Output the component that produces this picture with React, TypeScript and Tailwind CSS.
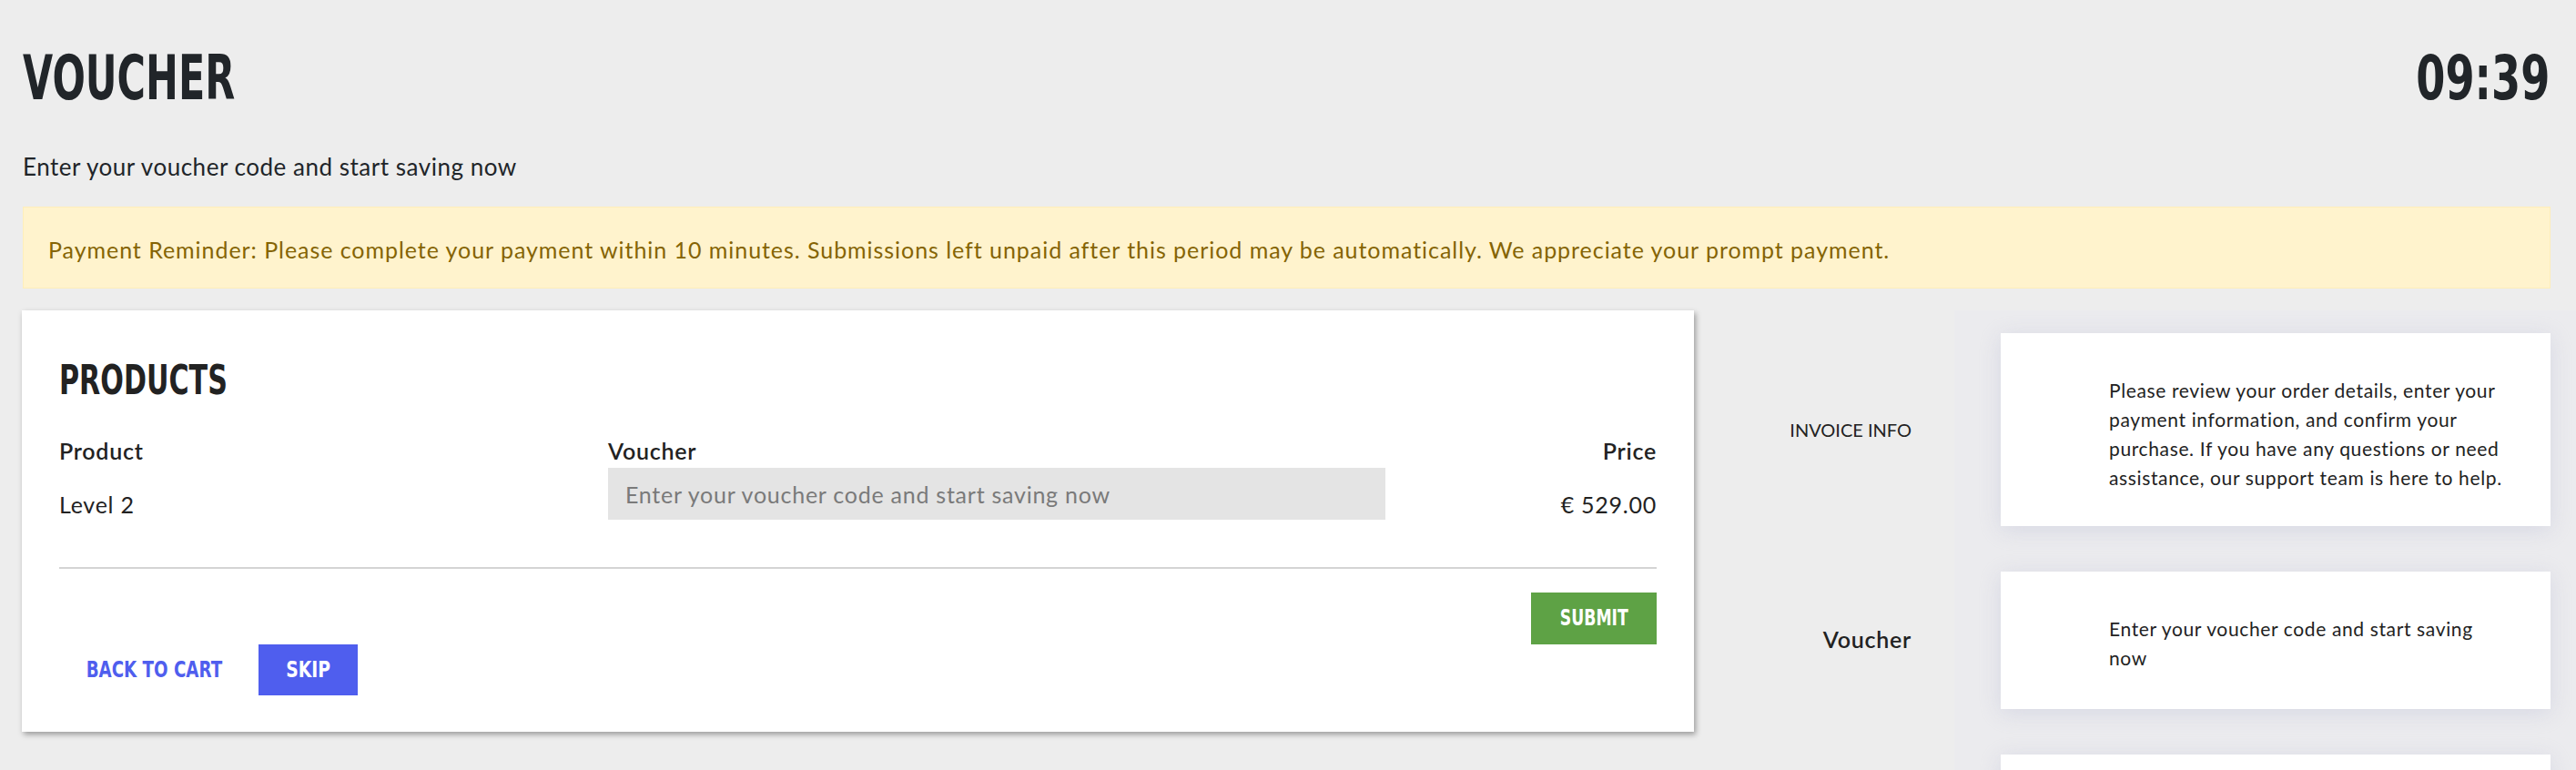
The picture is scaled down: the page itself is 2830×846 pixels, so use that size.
const display = "font-['DejaVu_Sans',sans-serif] font-bold uppercase";
const body = "font-['Lato','Noto_Sans',sans-serif]";

const SIDE = [
  {
    label: "INVOICE INFO",
    labelClass: "text-[20px] font-normal tracking-normal",
    text: "Please review your order details, enter your payment information, and confirm your purchase. If you have any questions or need assistance, our support team is here to help.",
  },
  {
    label: "Voucher",
    labelClass: "text-[25px] font-semibold",
    text: "Enter your voucher code and start saving now",
  },
  {
    label: "",
    labelClass: "text-[25px] font-semibold",
    text: "",
  },
];

function ProductsCard() {
  return (
    <div className="w-[1837px] shrink-0 self-start bg-white px-[41px] pt-[54px] pb-[40px] shadow-[2px_3px_6px_rgba(0,0,0,0.35)]">
      <h2 className={`${display} text-[45px] leading-none text-[#222]`}>
        <span className="inline-block origin-left scale-x-[0.67]">Products</span>
      </h2>

      <div className="mt-[37px] grid grid-cols-[603px_850px_1fr] text-[25px] leading-[1.5] tracking-[0.03em] text-[#222]">
        <div className="font-semibold">Product</div>
        <div className="font-semibold">Voucher</div>
        <div className="text-right font-semibold">Price</div>

        <div className="pt-[22px]">Level 2</div>
        <div>
          <input
            type="text"
            placeholder="Enter your voucher code and start saving now"
            className={`${body} block h-[57px] w-[854px] bg-[#e4e4e4] px-[19px] text-[25px] tracking-[0.03em] text-[#222] outline-none placeholder:text-[#7a7a7a]`}
          />
        </div>
        <div className="pt-[22px] text-right">€ 529.00</div>
      </div>

      <div className="mt-[49px] h-[2px] bg-[#d4d4d4]" />

      <div className="mt-[26px] flex justify-end">
        <button
          type="button"
          className={`${display} flex h-[57px] w-[138px] items-center justify-center bg-[#5ea245] text-[25px] text-white`}
        >
          <span className="inline-block scale-x-[0.69]">Submit</span>
        </button>
      </div>

      <div className="flex items-center gap-[10px]">
        <button
          type="button"
          className={`${display} flex h-[56px] w-[209px] items-center justify-center text-[25px] text-[#4f5eee]`}
        >
          <span className="inline-block whitespace-nowrap scale-x-[0.73]">Back to cart</span>
        </button>
        <button
          type="button"
          className={`${display} flex h-[56px] w-[109px] items-center justify-center bg-[#4f5eee] text-[25px] text-white`}
        >
          <span className="inline-block scale-x-[0.75]">Skip</span>
        </button>
      </div>
    </div>
  );
}

function SidePanel() {
  return (
    <div className="flex-1 bg-[linear-gradient(to_right,transparent_286px,#ebebee_286px)] pt-[25px]">
      <div className="flex flex-col gap-[50px]">
        {SIDE.map((row, i) => (
          <div key={i} className="grid grid-cols-[286px_1fr]">
            <div className={`flex items-center justify-end pr-[47px] tracking-[0.03em] text-[#222] ${row.labelClass}`}>
              {row.label}
            </div>
            <div className="pl-[51px] pr-[28px]">
              <div className="min-h-[151px] bg-white pt-[47px] pb-[37px] pl-[119px] pr-[40px] shadow-[0_4px_22px_rgba(190,194,214,0.45)]">
                <p className="w-[434px] text-[21px] leading-[32px] tracking-[0.03em] text-[#222]">{row.text}</p>
              </div>
            </div>
          </div>
        ))}
      </div>
    </div>
  );
}

export default function App() {
  return (
    <div className={`${body} min-h-screen bg-[#ededed] text-[#212529]`}>
      <div className="pl-[25px] pr-[29px] pt-[52px]">
        <div className="flex items-start justify-between">
          <h1 className={`${display} text-[68px] leading-none text-[#212529]`}>
            <span className="inline-block origin-left scale-x-[0.63]">Voucher</span>
          </h1>
          <div className={`${display} text-[68px] leading-none text-[#212529]`}>
            <span className="inline-block origin-right scale-x-[0.68]">09:39</span>
          </div>
        </div>
        <p className="mt-[44px] text-[26px] leading-[1.5] tracking-[0.02em]">Enter your voucher code and start saving now</p>
      </div>

      <div className="mt-[24px] ml-[25px] mr-[28px] border border-[#ffeeba] bg-[#fff3cd] pl-[27px] pt-[28px] pb-[22px] text-[25px] leading-[1.5] tracking-[0.038em] text-[#856404]">
        Payment Reminder: Please complete your payment within 10 minutes. Submissions left unpaid after this period may be automatically. We appreciate your prompt payment.
      </div>

      <div className="mt-[24px] flex pl-[24px]">
        <ProductsCard />
        <SidePanel />
      </div>
    </div>
  );
}
